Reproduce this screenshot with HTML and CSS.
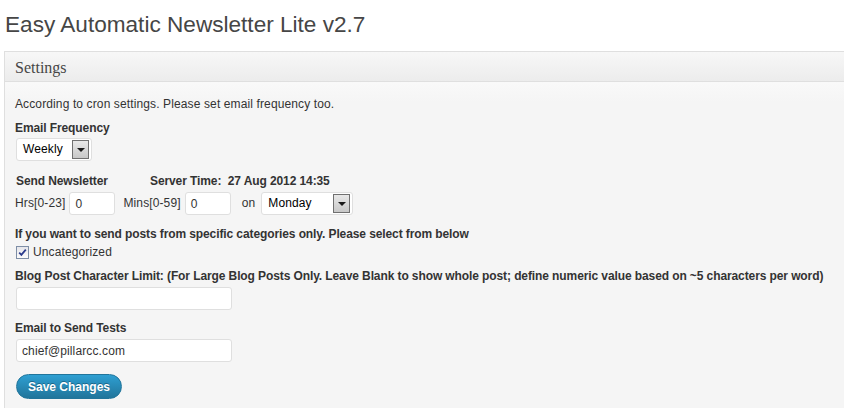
FILE: index.html
```html
<!DOCTYPE html>
<html>
<head>
<meta charset="utf-8">
<link rel="stylesheet" href="styles.css">
</head>
<body>
<div class="wrap">
  <h2 class="title">Easy Automatic Newsletter Lite v2.7</h2>
  <div class="postbox">
    <h3 class="postbox-head">Settings</h3>
    <div class="inside">
      <p class="note">According to cron settings. Please set email frequency too.</p>

      <div class="label">Email Frequency</div>
      <div class="fake-select sel-freq"><span class="sel-text">Weekly</span><span class="sel-arrow"></span></div>

      <div class="label label-send"><span class="send-title">Send Newsletter</span><span>Server Time:&nbsp; 27 Aug 2012 14:35</span></div>
      <div class="time-row">
        <span class="tlabel">Hrs[0-23]</span>
        <span class="input small">0</span>
        <span class="tlabel mins">Mins[0-59]</span>
        <span class="input small">0</span>
        <span class="tlabel on">on</span>
        <div class="fake-select sel-day"><span class="sel-text">Monday</span><span class="sel-arrow"></span></div>
      </div>

      <div class="label label-cat">If you want to send posts from specific categories only. Please select from below</div>
      <div class="check-row">
        <span class="checkbox"><svg width="11" height="11" viewBox="0 0 11 11"><path d="M2.2 5.6 L4.4 7.8 L8.8 2.6" fill="none" stroke="#2a3a8c" stroke-width="1.8"/></svg></span>
        <span class="check-text">Uncategorized</span>
      </div>

      <div class="label label-blog">Blog Post Character Limit: (For Large Blog Posts Only. Leave Blank to show whole post; define numeric value based on ~5 characters per word)</div>
      <span class="input wide"></span>

      <div class="label label-email">Email to Send Tests</div>
      <span class="input wide">chief@pillarcc.com</span>

      <div class="btn-row"><span class="button">Save Changes</span></div>
    </div>
  </div>
</div>
</body>
</html>
```

FILE: styles.css
```css
html, body {
  margin: 0;
  padding: 0;
  background: #ffffff;
  overflow: hidden;
}
body {
  font-family: "Liberation Sans", Arial, sans-serif;
  font-size: 12px;
  color: #333333;
  letter-spacing: 0.12px;
}
.wrap {
  padding-left: 4px;
}
.title {
  margin: 0;
  padding: 10px 0 0 1px;
  height: 41px;
  box-sizing: border-box;
  font-family: "Liberation Sans", Arial, sans-serif;
  font-weight: normal;
  font-size: 22.6px;
  letter-spacing: 0;
  line-height: 29px;
  color: #464646;
}
.postbox {
  border: 1px solid #dfdfdf;
  border-right: 0;
  background: #f5f5f5;
  margin-top: 10px;
  height: 400px;
}
.postbox-head {
  margin: 0;
  height: 29px;
  border-bottom: 1px solid #dfdfdf;
  background: linear-gradient(to bottom, #f7f7f7, #ececec);
  font-family: "Liberation Serif", "Times New Roman", serif;
  font-weight: normal;
  font-size: 16px;
  letter-spacing: 0;
  line-height: 31px;
  padding-left: 10px;
  color: #464646;
}
.inside {
  padding: 15px 0 0 10px;
  background: linear-gradient(to bottom, #f9f9f9, #f5f5f5 20px);
}
.note {
  margin: 0;
  line-height: 15px;
}
.label {
  font-weight: bold;
  letter-spacing: -0.1px;
  line-height: 15px;
  margin-top: 9px;
  color: #333333;
}
.fake-select {
  display: flex;
  align-items: center;
  box-sizing: border-box;
  height: 23px;
  background: #ffffff;
  border: 1px solid #dfdfdf;
  border-radius: 3px;
  padding: 0 2px 0 6px;
}
.sel-freq {
  width: 76px;
  margin-top: 2px;
  margin-left: 1px;
}
.sel-text {
  flex: 1;
  color: #000000;
  line-height: 21px;
}
.sel-arrow {
  width: 17px;
  height: 19px;
  box-sizing: border-box;
  border: 1px solid #707070;
  background: linear-gradient(to bottom, #e8e8e8, #c8c8c8);
  position: relative;
}
.sel-arrow::after {
  content: "";
  position: absolute;
  left: 4px;
  top: 7px;
  border-left: 4px solid transparent;
  border-right: 4px solid transparent;
  border-top: 4px solid #1a1a1a;
}
.label-send {
  margin-top: 13px;
  display: flex;
  padding-left: 1px;
}
.send-title {
  width: 134px;
}
.time-row {
  display: flex;
  align-items: center;
  margin-top: 3px;
  height: 23px;
  color: #333333;
}
.tlabel {
  line-height: 15px;
}
.input {
  display: flex;
  align-items: center;
  box-sizing: border-box;
  background: #ffffff;
  border: 1px solid #dfdfdf;
  border-radius: 3px;
  color: #333333;
  padding-left: 5px;
}
.input.small {
  width: 46px;
  height: 23px;
  margin-left: 4px;
}
.mins {
  margin-left: 8px;
}
.on {
  margin-left: 11px;
}
.sel-day {
  width: 92px;
  margin-left: 6px;
}
.label-cat {
  margin-top: 12px;
}
.check-row {
  display: flex;
  align-items: center;
  height: 16px;
  margin-top: 2px;
  padding-left: 1px;
}
.checkbox {
  width: 13px;
  height: 13px;
  box-sizing: border-box;
  border: 1px solid #7e8ea6;
  background: linear-gradient(to bottom, #e6e6ea, #fbfbfb);
  display: flex;
  align-items: center;
  justify-content: center;
}
.check-text {
  margin-left: 4px;
  line-height: 15px;
}
.label-blog {
  margin-top: 9px;
}
.input.wide {
  width: 216px;
  height: 23px;
  margin-top: 3px;
  margin-left: 1px;
  font-size: 12px;
}
.label-email {
  margin-top: 11px;
}
.btn-row {
  margin-top: 12px;
  padding-left: 1px;
}
.button {
  display: inline-flex;
  align-items: center;
  justify-content: center;
  box-sizing: border-box;
  width: 106px;
  height: 25px;
  border-radius: 13px;
  border: 1px solid #21759b;
  background: linear-gradient(to bottom, #2e9fd2, #21759b);
  color: #ffffff;
  font-weight: bold;
  font-size: 12px;
  letter-spacing: 0;
  text-shadow: 0 -1px 0 rgba(0,0,0,0.3);
}
```
